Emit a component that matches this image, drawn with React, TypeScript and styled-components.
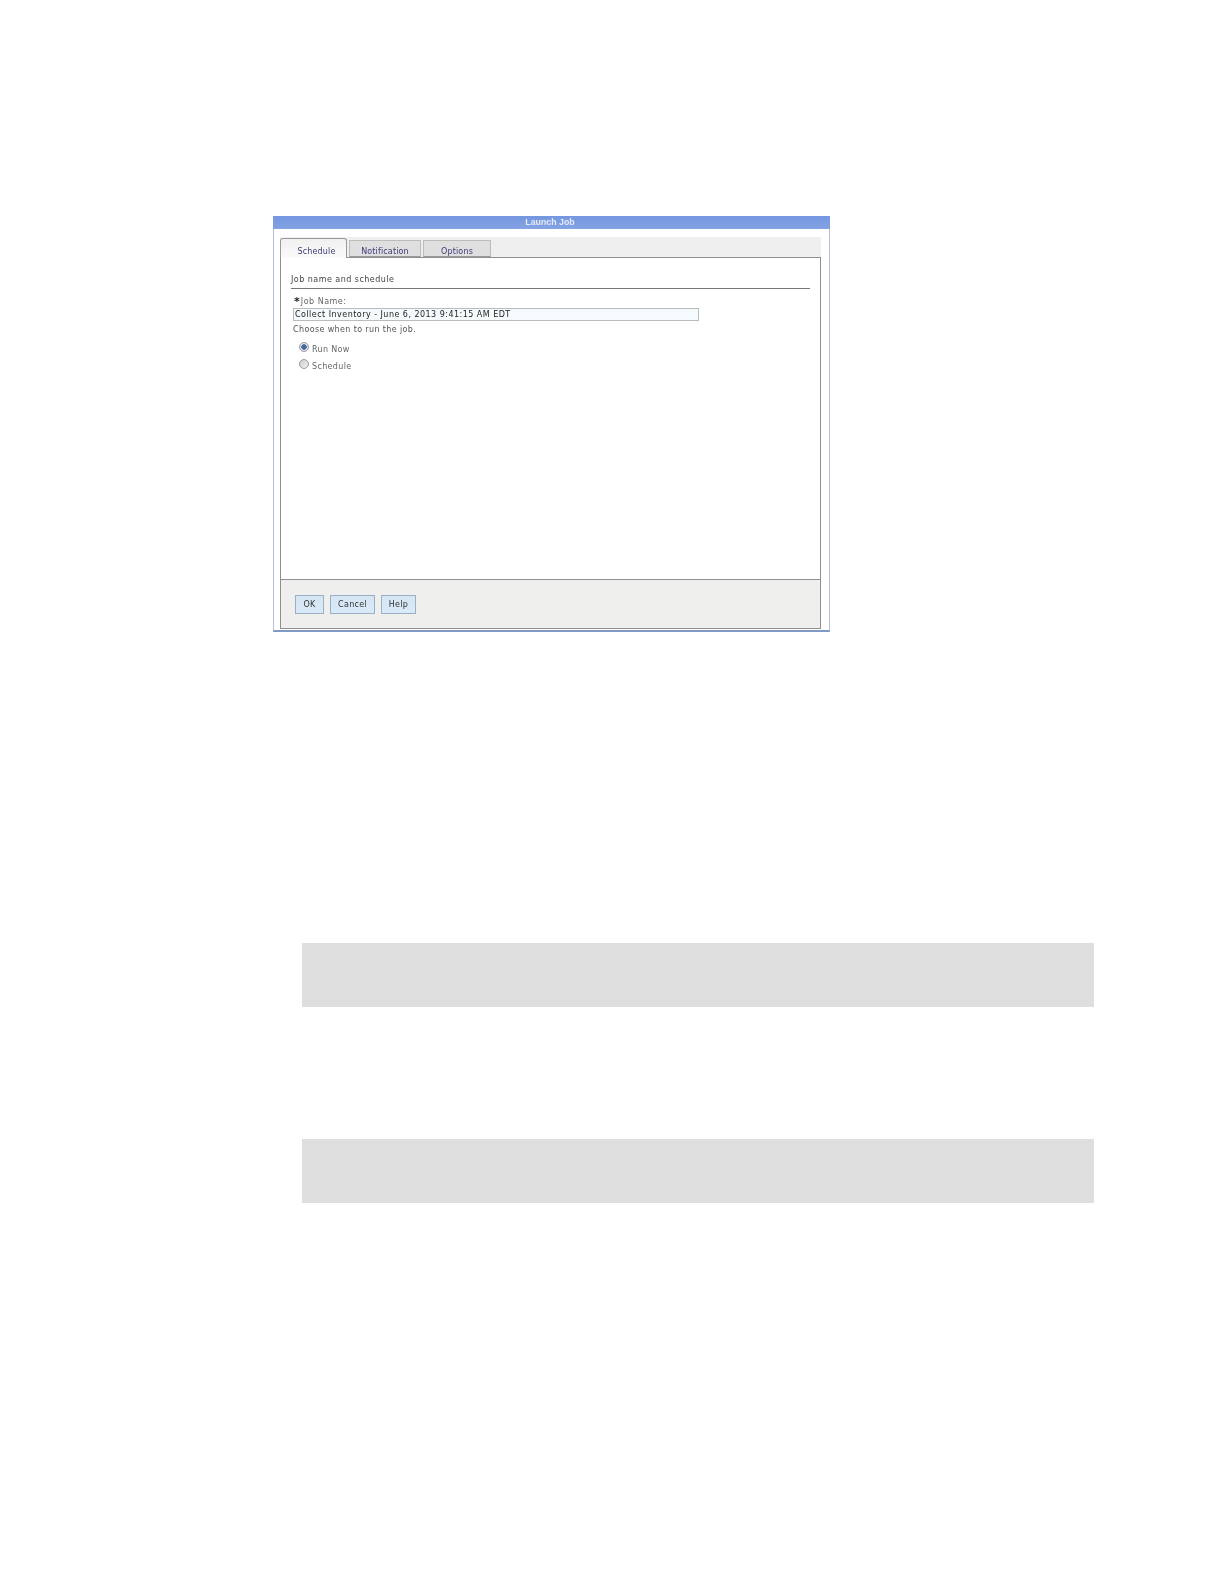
import styled, {createGlobalStyle} from "styled-components";

const GlobalStyle = createGlobalStyle`
    html, body {
        margin: 0;
        padding: 0;
        background: #fff;
    }
`

const Page = styled.div`
    width: 1224px;
    height: 1584px;
    padding: 216px 0 0 273px;
    box-sizing: border-box;
    overflow: hidden;
`

const Dialog = styled.div`
    width: 557px;
    height: 416px;
    box-sizing: border-box;
    border: 1px solid #b4bedd;
    border-top: none;
    border-bottom: 2px solid #7f9ac4;
    display: flex;
    flex-direction: column;
    font-family: "DejaVu Sans", sans-serif;
    font-size: 8px;
    color: #444;
    filter: blur(0.3px);
`

const TitleBar = styled.div`
    height: 13px;
    margin: 0 -1px;
    padding-right: 3px;
    background: linear-gradient(#7597e0, #84a3e4);
    color: #e4ebf8;
    font-family: "Liberation Sans", sans-serif;
    font-weight: bold;
    font-size: 8.8px;
    line-height: 13px;
    text-align: center;
`

const Body = styled.div`
    flex: 1;
    margin: 8px 8px 1px 6px;
    display: flex;
    flex-direction: column;
    min-height: 0;
`

const TabStrip = styled.div`
    height: 20px;
    flex: none;
    display: flex;
    align-items: flex-end;
    gap: 2px;
    background: #efefef;
`

const Tab = styled.div<{ $active?: boolean; $width: number }>`
    box-sizing: border-box;
    width: ${p => p.$width}px;
    height: ${p => p.$active ? 20 : 17}px;
    margin-bottom: ${p => p.$active ? -1 : 0}px;
    padding: ${p => p.$active ? "4px 0 0 6px" : "2px 0 0"};
    border: 1px solid ${p => p.$active ? "#9a9a9a" : "#bcbcbc"};
    border-bottom: ${p => p.$active ? "none" : "1px solid #999"};
    border-radius: ${p => p.$active ? "3px 3px 0 0" : "0"};
    background: ${p => p.$active ? "linear-gradient(#f0f0f0, #fbfbfb)" : "#dfdfdf"};
    color: #3d3a78;
    letter-spacing: .15px;
    text-align: center;
    line-height: 18px;
    position: relative;
`

const Panel = styled.div`
    flex: 1;
    border: 1px solid #8f8f8f;
    display: flex;
    flex-direction: column;
    min-height: 0;
`

const Content = styled.div`
    flex: 1;
    padding: 17px 10px 0 10px;
`

const Heading = styled.div`
    height: 13px;
    line-height: 10px;
    letter-spacing: .47px;
    border-bottom: 1px solid #777;
    color: #444;
`

const Label = styled.div`
    margin: 7px 0 0 3px;
    height: 12px;
    line-height: 12px;
    letter-spacing: .5px;
    display: flex;
    color: #666;
`

const Star = styled.span`
    color: #222;
    font-size: 11px;
    font-weight: bold;
    margin-right: 1px;
    letter-spacing: 0;
`

const NameInput = styled.div`
    box-sizing: border-box;
    margin: 0 0 0 2px;
    width: 406px;
    height: 13px;
    border: 1px solid #bbb;
    background: #f5fafd;
    color: #222;
    letter-spacing: .47px;
    line-height: 11px;
    padding-left: 1px;
`

const Hint = styled.div`
    margin: 3px 0 0 2px;
    line-height: 12px;
    letter-spacing: .37px;
    color: #555;
`

const RadioRow = styled.label<{ $first?: boolean }>`
    display: flex;
    align-items: center;
    gap: 3px;
    height: 12px;
    margin: ${p => p.$first ? 7 : 5}px 0 0 8px;
    letter-spacing: .35px;
    color: #666;
`

const Radio = styled.span<{ $on?: boolean }>`
    box-sizing: border-box;
    width: 10px;
    height: 10px;
    margin-top: -4px;
    border-radius: 50%;
    border: 1px solid #999;
    background: ${p => p.$on ? "radial-gradient(circle, #4a6a9c 0 2.5px, #dfe4ee 3px)" : "linear-gradient(135deg, #cfcfcf, #f0f0f0)"};
`

const Footer = styled.div`
    height: 49px;
    flex: none;
    box-sizing: border-box;
    border-top: 1px solid #8f8f8f;
    background: #efefed;
    padding: 15px 0 0 14px;
    display: flex;
    gap: 6px;
    align-items: flex-start;
`

const Button = styled.div<{ $width: number }>`
    box-sizing: border-box;
    width: ${p => p.$width}px;
    height: 19px;
    border: 1px solid #9bb0c4;
    background: linear-gradient(#d6e5f2, #d9eafa);
    color: #333;
    letter-spacing: .3px;
    text-align: center;
    line-height: 17px;
`

const NoteBlock = styled.div<{ $top: number }>`
    width: 792px;
    height: 64px;
    margin: ${p => p.$top}px 0 0 29px;
    background: #dedede;
`

function App() {
    return (
        <Page>
            <GlobalStyle/>
            <Dialog>
                <TitleBar>Launch Job</TitleBar>
                <Body>
                    <TabStrip>
                        <Tab $active $width={67}>Schedule</Tab>
                        <Tab $width={72}>Notification</Tab>
                        <Tab $width={68}>Options</Tab>
                    </TabStrip>
                    <Panel>
                        <Content>
                            <Heading>Job name and schedule</Heading>
                            <Label><Star>*</Star>Job Name:</Label>
                            <NameInput>Collect Inventory - June 6, 2013 9:41:15 AM EDT</NameInput>
                            <Hint>Choose when to run the job.</Hint>
                            <RadioRow $first><Radio $on/>Run Now</RadioRow>
                            <RadioRow><Radio/>Schedule</RadioRow>
                        </Content>
                        <Footer>
                            <Button $width={29}>OK</Button>
                            <Button $width={45}>Cancel</Button>
                            <Button $width={35}>Help</Button>
                        </Footer>
                    </Panel>
                </Body>
            </Dialog>
            <NoteBlock $top={311}/>
            <NoteBlock $top={132}/>
        </Page>
    )
}

export default App
